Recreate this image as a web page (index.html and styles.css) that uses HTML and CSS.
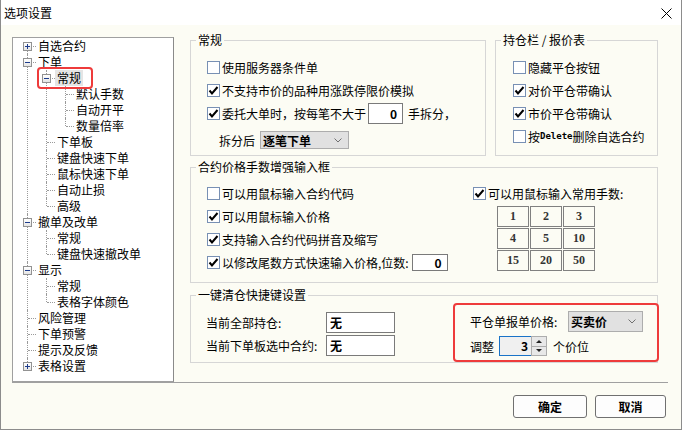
FILE: index.html
```html
<!DOCTYPE html>
<html lang="zh-CN">
<head>
    <meta charset="UTF-8">
    <title>选项设置</title>
    <link rel="stylesheet" href="styles.css">
</head>
<body>
    <div class="window">
        <div class="titlebar">
            <span class="title">选项设置</span>
            <svg class="close" width="11" height="11" viewBox="0 0 11 11">
                <path d="M0.5 0.5L10.5 10.5M10.5 0.5L0.5 10.5" stroke="#000" stroke-width="1" fill="none"/>
            </svg>
        </div>

        <div class="main">
            <div class="tree-box">
                <ul class="tree">
                    <li><span class="node"><i class="exp plus"></i>自选合约</span></li>
                    <li><span class="node"><i class="exp minus"></i>下单</span>
                        <ul>
                            <li><span class="node"><i class="exp minus"></i><span class="sel">常规</span></span><span class="mark"></span>
                                <ul>
                                    <li><span class="node">默认手数</span></li>
                                    <li><span class="node">自动开平</span></li>
                                    <li><span class="node">数量倍率</span></li>
                                </ul>
                            </li>
                            <li><span class="node">下单板</span></li>
                            <li><span class="node">键盘快速下单</span></li>
                            <li><span class="node">鼠标快速下单</span></li>
                            <li><span class="node">自动止损</span></li>
                            <li><span class="node">高级</span></li>
                        </ul>
                    </li>
                    <li><span class="node"><i class="exp minus"></i>撤单及改单</span>
                        <ul>
                            <li><span class="node">常规</span></li>
                            <li><span class="node">键盘快速撤改单</span></li>
                        </ul>
                    </li>
                    <li><span class="node"><i class="exp minus"></i>显示</span>
                        <ul>
                            <li><span class="node">常规</span></li>
                            <li><span class="node">表格字体颜色</span></li>
                        </ul>
                    </li>
                    <li><span class="node">风险管理</span></li>
                    <li><span class="node">下单预警</span></li>
                    <li><span class="node">提示及反馈</span></li>
                    <li><span class="node"><i class="exp plus"></i>表格设置</span></li>
                </ul>
            </div>

            <div class="panels">
                <div class="top-row">
                    <fieldset class="grp grp-general">
                        <legend>常规</legend>
                        <div class="rows">
                            <div class="row"><span class="cb"></span>使用服务器条件单</div>
                            <div class="row"><span class="cb on"><svg viewBox="0 0 11 11"><path d="M1.5 5.5L4 8.5L9.5 2"/></svg></span>不支持市价的品种用涨跌停限价模拟</div>
                            <div class="row"><span class="cb on"><svg viewBox="0 0 11 11"><path d="M1.5 5.5L4 8.5L9.5 2"/></svg></span>委托大单时，按每笔不大于<span class="num-box split-box">0</span><span class="after-box">手拆分，</span></div>
                            <div class="row row-split">拆分后<span class="select split-select">逐笔下单<svg width="8" height="5" viewBox="0 0 8 5"><path d="M0.5 0.5L4 4L7.5 0.5"/></svg></span></div>
                        </div>
                    </fieldset>

                    <fieldset class="grp grp-pos">
                        <legend>持仓栏 / 报价表</legend>
                        <div class="rows">
                            <div class="row"><span class="cb"></span>隐藏平仓按钮</div>
                            <div class="row"><span class="cb on"><svg viewBox="0 0 11 11"><path d="M1.5 5.5L4 8.5L9.5 2"/></svg></span>对价平仓带确认</div>
                            <div class="row"><span class="cb on"><svg viewBox="0 0 11 11"><path d="M1.5 5.5L4 8.5L9.5 2"/></svg></span>市价平仓带确认</div>
                            <div class="row"><span class="cb"></span>按<span class="mono">Delete</span>删除自选合约</div>
                        </div>
                    </fieldset>
                </div>

                <fieldset class="grp grp-input">
                    <legend>合约价格手数增强输入框</legend>
                    <div class="input-body">
                        <div class="rows input-left">
                            <div class="row"><span class="cb"></span>可以用鼠标输入合约代码</div>
                            <div class="row"><span class="cb on"><svg viewBox="0 0 11 11"><path d="M1.5 5.5L4 8.5L9.5 2"/></svg></span>可以用鼠标输入价格</div>
                            <div class="row"><span class="cb on"><svg viewBox="0 0 11 11"><path d="M1.5 5.5L4 8.5L9.5 2"/></svg></span>支持输入合约代码拼音及缩写</div>
                            <div class="row"><span class="cb on"><svg viewBox="0 0 11 11"><path d="M1.5 5.5L4 8.5L9.5 2"/></svg></span>以修改尾数方式快速输入价格,位数:<span class="num-box digit-box">0</span></div>
                        </div>
                        <div class="input-right">
                            <div class="row"><span class="cb on"><svg viewBox="0 0 11 11"><path d="M1.5 5.5L4 8.5L9.5 2"/></svg></span>可以用鼠标输入常用手数:</div>
                            <div class="lot-grid">
                                <span>1</span><span>2</span><span>3</span>
                                <span>4</span><span>5</span><span>10</span>
                                <span>15</span><span>20</span><span>50</span>
                            </div>
                        </div>
                    </div>
                </fieldset>

                <fieldset class="grp grp-clear">
                    <legend>一键清仓快捷键设置</legend>
                    <div class="clear-body">
                        <div class="clear-left">
                            <div class="field"><span class="field-label">当前全部持仓:</span><span class="text-box">无</span></div>
                            <div class="field"><span class="field-label">当前下单板选中合约:</span><span class="text-box">无</span></div>
                        </div>
                        <div class="price-box">
                            <div class="field"><span class="price-label">平仓单报单价格:</span><span class="select price-select">买卖价<svg width="8" height="5" viewBox="0 0 8 5"><path d="M0.5 0.5L4 4L7.5 0.5"/></svg></span></div>
                            <div class="field adjust">
                                <span class="adjust-label">调整</span>
                                <span class="spin-input">3</span>
                                <span class="spin-btns"><span><i class="arrow-up"></i></span><span><i class="arrow-down"></i></span></span>
                                <span class="unit">个价位</span>
                            </div>
                        </div>
                    </div>
                </fieldset>
            </div>
        </div>

        <div class="footer">
            <button class="btn btn-ok">确定</button>
            <button class="btn btn-cancel">取消</button>
        </div>
    </div>
</body>
</html>
```

FILE: styles.css
```css
* {
    box-sizing: border-box;
}

body {
    margin: 0;
    font-family: "Noto Sans CJK SC", "Liberation Sans", sans-serif;
    font-size: 12px;
    color: #000;
    background: #fff;
}

.window {
    width: 682px;
    height: 430px;
    border: 1px solid #8c8c8c;
    border-top: none;
    background: #fcfcf4;
    display: flex;
    flex-direction: column;
    overflow: hidden;
}

.titlebar {
    flex: none;
    height: 25px;
    background: #fff;
    display: flex;
    align-items: center;
    justify-content: space-between;
    padding: 0 9px 0 3px;
}

.title {
    font-size: 12px;
    line-height: 14px;
}

.close {
    margin-top: 2px;
}

.main {
    flex: none;
    height: 357px;
    display: flex;
    align-items: flex-start;
    padding-left: 11px;
}

/* tree */

.tree-box {
    flex: none;
    width: 162px;
    height: 345px;
    margin-top: 12px;
    background: #fff;
    border: 1px solid #a0a0a0;
    border-right-color: #8a8a8a;
}

.tree, .tree ul {
    list-style: none;
    margin: 0;
    padding: 0;
}

.tree {
    margin-left: 14px;
}

.tree ul {
    margin-left: 8px;
}

.tree li {
    position: relative;
    padding-left: 11px;
}

.tree li::before {
    content: "";
    position: absolute;
    left: 0;
    top: 0;
    bottom: 0;
    border-left: 1px dotted #9a9a9a;
}

.tree > li:first-child::before {
    top: 8px;
}

.tree li:last-child::before {
    bottom: auto;
    height: 8px;
}

.tree li::after {
    content: "";
    position: absolute;
    left: 1px;
    top: 8px;
    width: 8px;
    border-top: 1px dotted #9a9a9a;
}

.node {
    display: block;
    height: 16px;
    line-height: 16px;
    white-space: nowrap;
}

.exp {
    position: absolute;
    z-index: 1;
    left: -4px;
    top: 4px;
    width: 9px;
    height: 9px;
    border: 1px solid #929292;
    background: linear-gradient(#ffffff, #e4e4e4);
}

.exp::before {
    content: "";
    position: absolute;
    left: 1px;
    top: 3px;
    width: 5px;
    height: 1px;
    background: #1d3c8c;
}

.plus::after {
    content: "";
    position: absolute;
    left: 3px;
    top: 1px;
    width: 1px;
    height: 5px;
    background: #1d3c8c;
}

.sel {
    display: inline-block;
    background: #e5e5e5;
    padding: 0 2px;
    margin-left: -2px;
}

.mark {
    position: absolute;
    z-index: 2;
    left: -9px;
    top: -3px;
    width: 56px;
    height: 22px;
    border: 2px solid #ee3b3b;
    border-radius: 4px;
}

/* right side */

.panels {
    flex: none;
    width: 468px;
    margin-left: 16px;
    margin-top: 8px;
}

.top-row {
    display: flex;
    gap: 9px;
}

.grp {
    margin: 0;
    min-width: 0;
    border: 1px solid #d6d6d6;
    padding: 0;
}

.grp legend {
    font-size: 12px;
    line-height: 14px;
    padding: 0 2px;
    margin-left: 5px;
}

.grp-general {
    width: 296px;
    height: 123px;
    padding-top: 10px;
}

.grp-general .rows {
    padding-left: 16px;
}

.grp-pos {
    width: 163px;
    height: 123px;
    padding-top: 10px;
}

.grp-pos .rows {
    padding-left: 17px;
}

.grp-input {
    height: 123px;
    margin-top: 4px;
    padding-top: 9px;
}

.grp-clear {
    height: 75px;
    margin-top: 5px;
    padding-top: 1px;
}

.rows {
    display: flex;
    flex-direction: column;
    gap: 3px;
}

.row {
    display: flex;
    align-items: center;
    height: 20px;
    white-space: nowrap;
}

.row-split {
    margin-top: 4px;
    padding-left: 12px;
}

.cb {
    flex: none;
    width: 13px;
    height: 13px;
    margin-right: 2px;
    border: 1px solid #7890b4;
    background: #fff;
    display: flex;
    align-items: center;
    justify-content: center;
}

.cb svg {
    width: 11px;
    height: 11px;
}

.cb svg path {
    fill: none;
    stroke: #000;
    stroke-width: 2;
}

.mono {
    font-family: "DejaVu Sans Mono", "Liberation Mono", monospace;
    font-size: 9px;
    font-weight: bold;
}

.num-box {
    display: inline-block;
    border: 1px solid #7a7a7a;
    background: #fff;
    text-align: right;
    font-weight: bold;
    padding-right: 5px;
}

.split-box {
    width: 35px;
    height: 21px;
    line-height: 19px;
    margin-left: 2px;
}

.after-box {
    margin-left: 5px;
}

.digit-box {
    width: 36px;
    height: 17px;
    line-height: 15px;
    margin-left: 3px;
}

.select {
    display: flex;
    align-items: center;
    justify-content: space-between;
    background: #e1e1e1;
    border: 1px solid #adadad;
    font-weight: bold;
    padding: 0 6px 0 2px;
}

.select svg path {
    fill: none;
    stroke: #707070;
    stroke-width: 1;
}

.split-select {
    width: 89px;
    height: 18px;
    margin-left: 5px;
}

/* group 2 */

.input-body {
    display: flex;
    padding-left: 16px;
}

.input-left {
    flex: 0 0 266px;
}

.lot-grid {
    display: grid;
    grid-template-columns: repeat(3, 32px);
    grid-auto-rows: 21px;
    gap: 1px;
    margin: 3px 0 0 24px;
}

.lot-grid span {
    border: 1px solid #808080;
    display: flex;
    align-items: center;
    justify-content: center;
    font-family: "Liberation Serif", serif;
    font-weight: bold;
    font-size: 12px;
    color: #333;
}

/* group 3 */

.clear-body {
    display: flex;
    align-items: flex-start;
    padding-left: 15px;
}

.clear-left {
    margin-top: 9px;
    display: flex;
    flex-direction: column;
    gap: 2px;
}

.field {
    display: flex;
    align-items: center;
    white-space: nowrap;
}

.field-label {
    width: 120px;
}

.text-box {
    width: 69px;
    height: 21px;
    line-height: 19px;
    border: 1px solid #7a7a7a;
    background: #fff;
    font-weight: bold;
    padding-left: 3px;
}

.price-box {
    margin-left: auto;
    margin-right: -2px;
    width: 206px;
    height: 59px;
    border: 2px solid #ee3b3b;
    border-radius: 4px;
    padding: 6px 0 0 15px;
}

.price-label {
    width: 98px;
}

.price-select {
    width: 75px;
    height: 21px;
}

.adjust {
    margin-top: 4px;
}

.adjust-label {
    width: 29px;
}

.spin-input {
    width: 32px;
    height: 20px;
    line-height: 18px;
    border: 1px solid #1a73c8;
    border-right: none;
    background: #f0f0f0;
    text-align: right;
    font-weight: bold;
    padding-right: 3px;
}

.spin-btns {
    width: 16px;
    height: 20px;
    display: flex;
    flex-direction: column;
}

.spin-btns span {
    flex: 1;
    border: 1px solid #adadad;
    background: #e8e8e8;
    display: flex;
    align-items: center;
    justify-content: center;
}

.spin-btns span + span {
    border-top: none;
}

.arrow-up {
    width: 0;
    height: 0;
    border-left: 3px solid transparent;
    border-right: 3px solid transparent;
    border-bottom: 3px solid #222;
}

.arrow-down {
    width: 0;
    height: 0;
    border-left: 3px solid transparent;
    border-right: 3px solid transparent;
    border-top: 3px solid #222;
}

.unit {
    margin-left: 6px;
}

/* footer */

.footer {
    flex: none;
    height: 47px;
    margin: 0 13px 0 11px;
    border-top: 1px solid #a0a0a0;
    display: flex;
    justify-content: flex-end;
    align-items: flex-start;
    gap: 8px;
    padding: 12px 2px 0 0;
}

.btn {
    height: 23px;
    border: 1px solid #707070;
    border-radius: 3px;
    background: #fdfdfd;
    font-family: "Noto Sans CJK SC", sans-serif;
    font-size: 12px;
    font-weight: bold;
    padding: 0;
}

.btn-ok {
    width: 74px;
}

.btn-cancel {
    width: 71px;
}
```
